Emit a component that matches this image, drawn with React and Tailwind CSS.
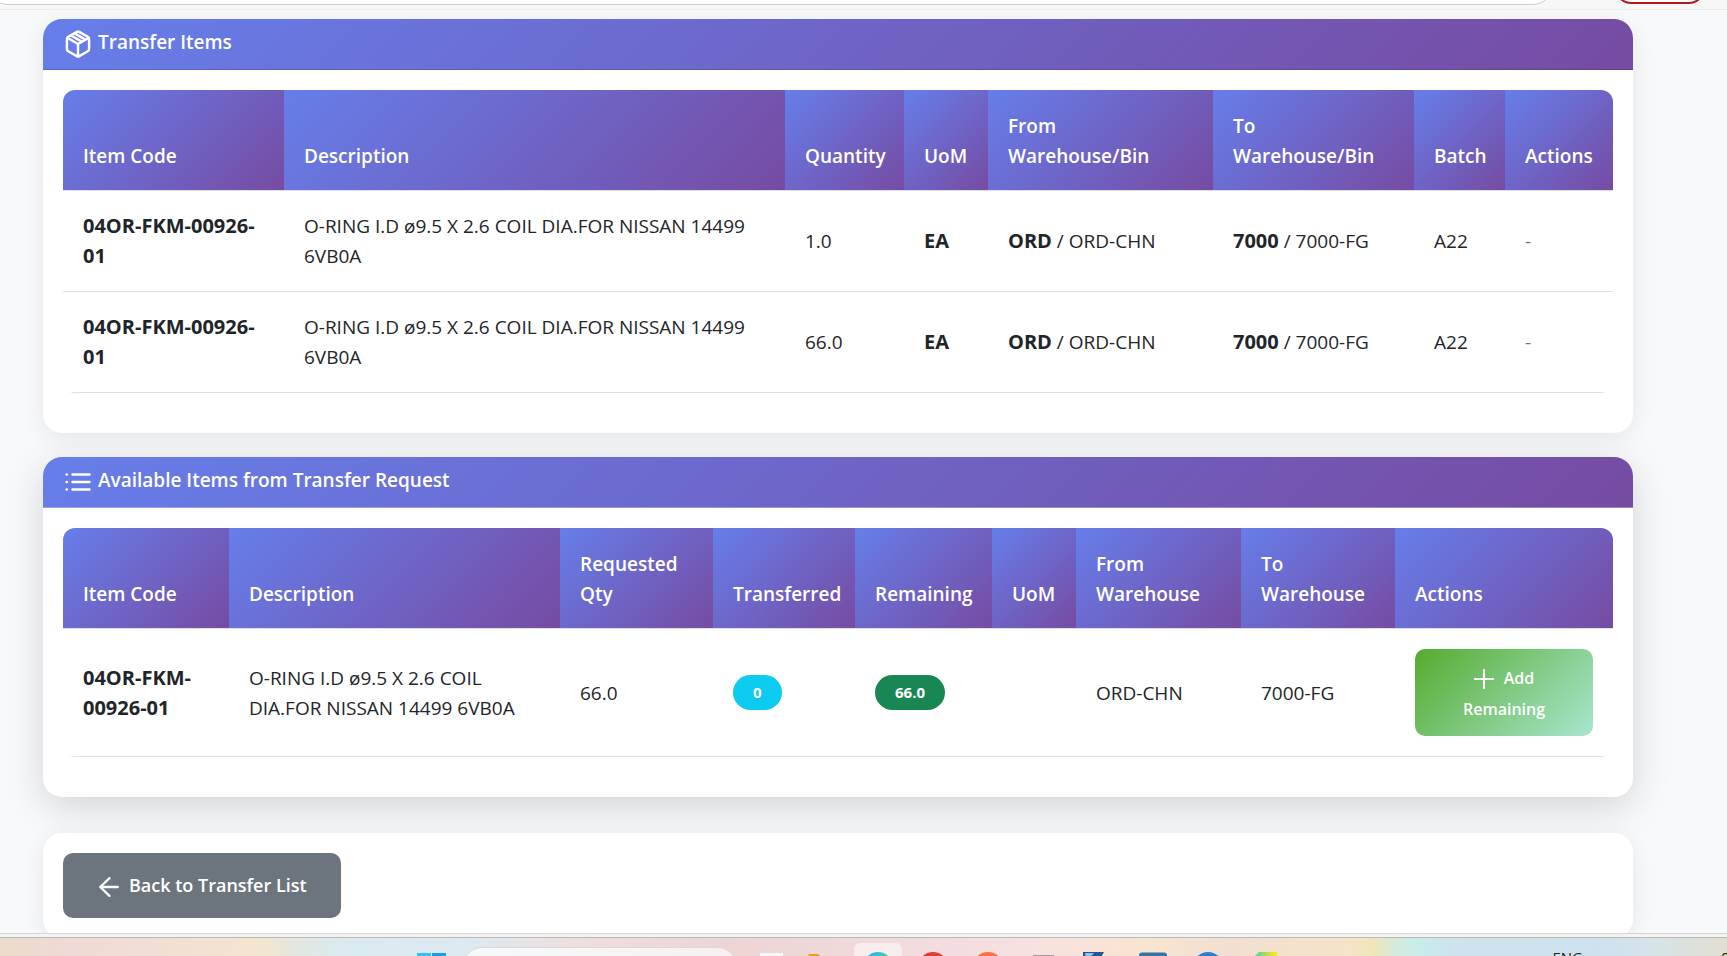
const gradient = 'bg-[linear-gradient(135deg,#667eea_0%,#764ba2_100%)]';

function BoxIcon() {
  return (
    <svg viewBox="0 0 24 24" className="h-7 w-[30px] shrink-0" fill="none" stroke="currentColor" strokeWidth="2.1" strokeLinecap="round" strokeLinejoin="round" aria-hidden="true">
      <path d="M10.9 1.6 3.6 5.8a2.2 2.2 0 0 0-1.1 1.9v8.6c0 .8.4 1.5 1.1 1.9l7.3 4.2c.7.4 1.5.4 2.2 0l7.3-4.2c.7-.4 1.1-1.1 1.1-1.9V7.7c0-.8-.4-1.5-1.1-1.9l-7.3-4.2c-.7-.4-1.5-.4-2.2 0Z" />
      <path d="M3 6.8 12 12l9-5.2M12 12v10.5" />
      <path d="m6 4.7 9.200 5.300M9.100 2.900l9.200 5.300" />
    </svg>
  );
}

function ListIcon() {
  return (
    <svg viewBox="0 0 30 28" className="h-7 w-[30px] shrink-0" fill="none" stroke="currentColor" strokeWidth="2.5" strokeLinecap="round" aria-hidden="true">
      <path d="M9.5 6.500h17M9.500 14h17M9.500 21.500h17" />
      <path d="M3.700 6.500h.1M3.700 14h.1M3.700 21.500h.1" strokeWidth="2.7" />
    </svg>
  );
}

function PlusIcon() {
  return (
    <svg viewBox="0 0 20 20" className="size-5" fill="none" stroke="currentColor" strokeWidth="2.1" strokeLinecap="round" aria-hidden="true">
      <path d="M10 1v18M1 10h18" />
    </svg>
  );
}

function ArrowLeftIcon() {
  return (
    <svg viewBox="0 0 20 20" className="mt-[3px] size-5" fill="none" stroke="currentColor" strokeWidth="2.3" strokeLinecap="round" strokeLinejoin="round" aria-hidden="true">
      <path d="M10.5 1.2 1.2 10l9.3 8.8M1.5 10h17.3" />
    </svg>
  );
}

function Card({ icon, title, raised, children }) {
  return (
    <section className={`rounded-[19px] bg-white ${raised ? 'shadow-[0_10px_38px_rgba(0,0,0,0.15)]' : 'shadow-[0_5px_25px_rgba(0,0,0,0.08)]'}`}>
      <header className={`flex items-start gap-[5px] rounded-t-[19px] border-b px-5 py-[11px] text-white ${raised ? 'border-white/30' : 'border-black/15'} ${gradient} bg-origin-border`}>
        {icon}
        <h2 className="text-[19px] leading-6 font-semibold">{title}</h2>
      </header>
      <div className="px-5 pt-5 pb-10">
        <div className="overflow-hidden rounded-[12px]">{children}</div>
      </div>
    </section>
  );
}

function Table({ columns, children }) {
  return (
    <table className="w-full table-fixed border-separate border-spacing-0 text-left">
      <thead>
        <tr>
          {columns.map(([name, width]) => (
            <th key={name} scope="col" className={`${width} border-b border-[#dee2e6] bg-clip-padding px-5 pt-[21px] pb-[19px] align-bottom text-[19px] leading-[30px] font-semibold text-white ${gradient}`}>
              {name}
            </th>
          ))}
        </tr>
      </thead>
      <tbody>{children}</tbody>
    </table>
  );
}

function Cell({ children }) {
  return <td className="border-b border-[#dee2e6] p-5 align-middle text-[19px] leading-[30px]">{children}</td>;
}

function Strong({ children }) {
  return <strong className="text-[20px] font-bold">{children}</strong>;
}

const transferColumns = [
  ['Item Code', 'w-[221px]'],
  ['Description', 'w-[501px]'],
  ['Quantity', 'w-[119px]'],
  ['UoM', 'w-[84px]'],
  ['From Warehouse/Bin', 'w-[225px]'],
  ['To Warehouse/Bin', 'w-[201px]'],
  ['Batch', 'w-[91px]'],
  ['Actions', 'w-[108px]'],
];

const availableColumns = [
  ['Item Code', 'w-[166px]'],
  ['Description', 'w-[331px]'],
  ['Requested Qty', 'w-[153px]'],
  ['Transferred', 'w-[142px]'],
  ['Remaining', 'w-[137px]'],
  ['UoM', 'w-[84px]'],
  ['From Warehouse', 'w-[165px]'],
  ['To Warehouse', 'w-[154px]'],
  ['Actions', 'w-[218px]'],
];

const quantities = ['1.0', '66.0'];

function Badge({ color, children }) {
  return <span className={`inline-block rounded-[18px] px-5 text-[15px] leading-[35px] font-bold text-white ${color}`}>{children}</span>;
}

function AppIcon({ label, active, children }) {
  return (
    <button type="button" aria-label={label} className={`size-12 shrink-0 rounded-md ${active ? 'bg-white/50' : ''}`}>
      <svg viewBox="0 0 48 48" className="size-12" aria-hidden="true">{children}</svg>
    </button>
  );
}

function Taskbar() {
  return (
    <footer className="flex h-[19px] shrink-0 items-start gap-[7px] overflow-hidden border-t border-[#b9b6b4] bg-[linear-gradient(90deg,#ecdccb_0px,#efdad5_70px,#f2e1d4_200px,#f4e5cf_265px,#e4e7de_292px,#d9ebf0_345px,#dde9f0_480px,#efdfdc_580px,#ecd5d3_730px,#f3dde0_960px,#f8e2de_1045px,#f9e4d0_1150px,#f2dfd2_1230px,#f5e4c8_1350px,#efe6b8_1374px,#d5e9dc_1396px,#c6edeb_1420px,#cfe3ee_1450px,#cee1ee_1600px,#d5e4ea_1650px,#e2dfd0_1727px)] pt-[5px] pl-[407px]">
      <AppIcon label="Start">
        <path d="M10 10h14v14H10z" fill="#3cbcf4" />
        <path d="M25 10h14v14H25z" fill="#1c9be6" />
        <path d="M10 25h14v14H10zM25 25h14v14H25z" fill="#1286d8" />
      </AppIcon>
      <div className="mt-1 h-10 w-[275px] shrink-0 rounded-full border border-[#dcd8d8] bg-[linear-gradient(90deg,#f4fafb,#f8f0f0)]" />
      <AppIcon label="Task view">
        <path d="M16 10h23v22H16z" fill="#f8f8f8" />
      </AppIcon>
      <AppIcon label="Files">
        <path d="M9 13a2 2 0 0 1 2-2h8l3 3v20H9z" fill="#e2a30f" />
      </AppIcon>
      <AppIcon label="Edge" active>
        <defs>
          <linearGradient id="edge"><stop offset="0.4" stopColor="#2bbbe0" /><stop offset="1" stopColor="#58d68a" /></linearGradient>
        </defs>
        <circle cx="24" cy="24" r="15" fill="url(#edge)" />
      </AppIcon>
      <AppIcon label="Browser"><circle cx="24" cy="24" r="15" fill="#e13d30" /></AppIcon>
      <AppIcon label="Postman"><circle cx="24" cy="24" r="15" fill="#ff6f3d" /></AppIcon>
      <AppIcon label="Terminal"><path d="M14 12h21v20H14z" fill="#a89a9c" /></AppIcon>
      <AppIcon label="Editor">
        <path d="M9 9h21l-8 14H9z" fill="#24558f" />
        <path d="M11 10h9l-8 9z" fill="#8fbdf0" />
      </AppIcon>
      <AppIcon label="Database"><rect x="10" y="9.5" width="28" height="28" rx="3" fill="#3475a3" /></AppIcon>
      <AppIcon label="Mail"><circle cx="24" cy="24" r="15" fill="#2f7fd0" /></AppIcon>
      <AppIcon label="IDE">
        <defs>
          <linearGradient id="ide"><stop offset="0" stopColor="#2cc7c4" /><stop offset="0.9" stopColor="#f3ea1a" /></linearGradient>
        </defs>
        <path d="M20 9h18v28H12V17z" fill="url(#ide)" />
      </AppIcon>
      <div className="mt-1 ml-auto flex shrink-0 gap-[138px] text-[15px] leading-5 text-[#222]">
        <span>ENG</span>
        <span className="w-[6px]">0</span>
      </div>
    </footer>
  );
}

export default function App() {
  return (
    <div className="flex h-screen flex-col overflow-hidden bg-[#f8f9fb] font-['Open_Sans','Segoe_UI',sans-serif] text-[#212529]">
      <div className="flex h-[10px] shrink-0 items-end justify-between overflow-hidden border-b border-[#ececec] bg-[#f7f7f7] pr-[22px] pb-1">
        <input aria-label="Address" className="-ml-3 h-10 w-[1565px] rounded-full border border-[#cdcdcd] bg-white outline-none" />
        <button type="button" aria-label="Update" className="mb-px h-8 w-[90px] rounded-full border-2 border-[#b3191c] bg-white" />
      </div>

      <main className="flex min-h-0 flex-1 flex-col overflow-x-hidden overflow-y-auto pt-[9px] pr-[94px] pl-[43px] [scrollbar-width:none]">
        <Card icon={<BoxIcon />} title="Transfer Items">
          <Table columns={transferColumns}>
            {quantities.map((quantity) => (
              <tr key={quantity}>
                <Cell><Strong>04OR-FKM-00926-01</Strong></Cell>
                <Cell>O-RING I.D ø9.5 X 2.6 COIL DIA.FOR NISSAN 14499 6VB0A</Cell>
                <Cell>{quantity}</Cell>
                <Cell><Strong>EA</Strong></Cell>
                <Cell><Strong>ORD</Strong> / ORD-CHN</Cell>
                <Cell><Strong>7000</Strong> / 7000-FG</Cell>
                <Cell>A22</Cell>
                <Cell><span className="text-[#6c757d]">-</span></Cell>
              </tr>
            ))}
          </Table>
        </Card>

        <div className="mt-6">
          <Card icon={<ListIcon />} title="Available Items from Transfer Request" raised>
            <Table columns={availableColumns}>
              <tr>
                <Cell><Strong>04OR-FKM-00926-01</Strong></Cell>
                <Cell>O-RING I.D ø9.5 X 2.6 COIL DIA.FOR NISSAN 14499 6VB0A</Cell>
                <Cell>66.0</Cell>
                <Cell><Badge color="bg-[#0dcaf0]">0</Badge></Cell>
                <Cell><Badge color="bg-[#198754]">66.0</Badge></Cell>
                <Cell />
                <Cell>ORD-CHN</Cell>
                <Cell>7000-FG</Cell>
                <Cell>
                  <button type="button" className="flex w-full flex-col items-center rounded-[10px] bg-[linear-gradient(135deg,#56ab2f_0%,#a8e6cf_100%)] pt-[14px] pb-[11px] text-[16px] leading-[31px] font-semibold text-white">
                    <span className="flex items-center gap-[10px]"><PlusIcon />Add</span>
                    <span>Remaining</span>
                  </button>
                </Cell>
              </tr>
            </Table>
          </Card>
        </div>

        <section className="mt-9 rounded-[19px] bg-white p-5 shadow-[0_5px_25px_rgba(0,0,0,0.08)]">
          <a href="#transfers" className="inline-flex items-center gap-[10px] rounded-[10px] bg-[#6c757d] py-[17px] pr-[34px] pl-9 align-top text-[18px] leading-[31px] font-semibold text-white">
            <ArrowLeftIcon />
            Back to Transfer List
          </a>
        </section>
      </main>

      <div className="h-1 shrink-0 border-t border-[#d6d6d6] bg-[#f4f4f4]" />
      <Taskbar />
    </div>
  );
}
